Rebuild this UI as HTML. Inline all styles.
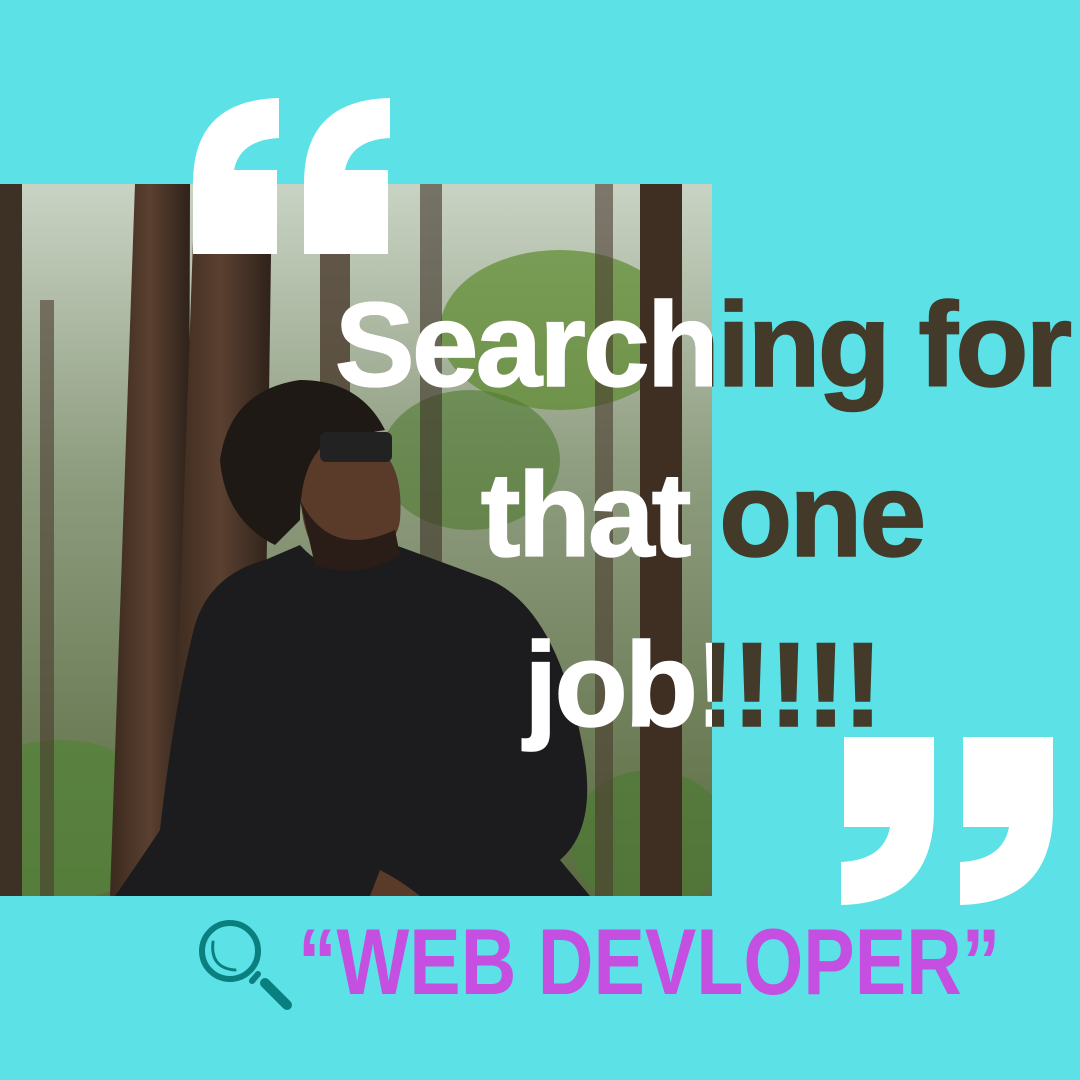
<!DOCTYPE html>
<html><head><meta charset="utf-8"><style>
html,body{margin:0;padding:0}
body{width:1080px;height:1080px;background:#5ce1e6;position:relative;overflow:hidden;font-family:"Liberation Sans",sans-serif}
.ph{position:absolute;left:0;top:184px;width:712px;height:712px}
.txt{position:absolute;left:0;top:0;width:1080px;height:1080px;pointer-events:none}
.txt div{position:absolute;left:0;width:1404px;text-align:center;font-weight:bold;font-size:120px;letter-spacing:-3px;white-space:nowrap;line-height:1;-webkit-text-stroke:1.5px currentColor}
.dark div{color:#433a2a}
.white{clip-path:inset(184px 368px 184px 0)}
.white div{color:#fff}
.wd{position:absolute;left:298px;top:915px;font-weight:bold;font-size:94px;color:#c44fe0;transform:scaleX(0.82);transform-origin:left top;white-space:nowrap;letter-spacing:0px;line-height:1}
</style></head><body>
<svg class="ph" viewBox="0 184 712 712" xmlns="http://www.w3.org/2000/svg">
<defs>
<linearGradient id="bg" x1="0" y1="0" x2="0" y2="1"><stop offset="0" stop-color="#c9d3c4"/><stop offset=".4" stop-color="#8f9d80"/><stop offset="1" stop-color="#5a6b40"/></linearGradient>
<linearGradient id="tr" x1="0" y1="0" x2="1" y2="0"><stop offset="0" stop-color="#3b2a1e"/><stop offset=".5" stop-color="#5a4030"/><stop offset="1" stop-color="#2e221a"/></linearGradient>
</defs>
<rect x="0" y="184" width="712" height="712" fill="url(#bg)"/>
<ellipse cx="560" cy="330" rx="120" ry="80" fill="#5d8a2e" opacity=".7"/>
<ellipse cx="470" cy="460" rx="90" ry="70" fill="#4f7a30" opacity=".6"/>
<ellipse cx="60" cy="820" rx="110" ry="80" fill="#55823a" opacity=".8"/>
<ellipse cx="650" cy="840" rx="80" ry="70" fill="#4e7a36" opacity=".7"/>
<rect x="0" y="184" width="22" height="712" fill="#3d3024"/>
<path d="M135 184 L190 184 L188 896 L110 896 Z" fill="url(#tr)"/>
<path d="M195 184 L272 184 L262 896 L170 896 Z" fill="url(#tr)"/>
<rect x="320" y="250" width="30" height="646" fill="#4a3a2c" opacity=".8"/>
<rect x="420" y="184" width="22" height="712" fill="#3e3228" opacity=".6"/>
<rect x="640" y="184" width="42" height="712" fill="#3f2f23"/>
<rect x="595" y="184" width="18" height="712" fill="#4a3b2e" opacity=".6"/>
<rect x="40" y="300" width="14" height="596" fill="#4a3b2e" opacity=".6"/>
<path d="M195 625 Q210 575 265 560 L300 545 Q340 590 395 545 Q450 565 490 580 Q560 610 585 760 Q595 830 560 860 L590 896 L115 896 Q140 860 160 830 Q175 700 195 625 Z" fill="#1c1c1e"/>
<path d="M300 480 Q310 420 360 440 Q405 450 400 520 Q395 560 330 560 Q300 550 300 480 Z" fill="#5a3a28"/>
<path d="M300 500 Q330 560 395 530 L400 555 Q360 580 315 565 Z" fill="#2a1c16"/>
<path d="M220 460 Q230 390 300 380 Q360 380 385 430 L330 440 Q300 460 300 520 L275 545 Q225 520 220 460 Z" fill="#1f1915"/>
<rect x="320" y="432" width="72" height="30" rx="6" fill="#222"/>
<path d="M380 870 Q400 880 420 896 L370 896 Z" fill="#5a3a28"/>
</svg>
<div class="txt dark">
<div style="top:285px">Searching for</div>
<div style="top:455px">that one</div>
<div style="top:625px">job!!!!!</div>
</div>
<div class="txt white">
<div style="top:285px">Searching for</div>
<div style="top:455px">that one</div>
<div style="top:625px">job!!!!!</div>
</div>
<svg style="position:absolute;left:0;top:0" width="1080" height="1080" xmlns="http://www.w3.org/2000/svg">
<g fill="#fff">
<path d="M193 254 L193 183 Q193 100 279 98 L279 138 Q240 140 234 170 L277 170 L277 254 Z"/>
<path d="M304 254 L304 183 Q304 100 390 98 L390 138 Q351 140 345 170 L388 170 L388 254 Z"/>
<path d="M844 737 L934 737 L934 810 Q934 903 841 905 L841 862 Q884 860 890 827 L844 827 Z"/>
<path d="M963 737 L1053 737 L1053 810 Q1053 903 960 905 L960 862 Q1003 860 1009 827 L963 827 Z"/>
</g>
<g stroke="#0a7f80" fill="none" stroke-linecap="round">
<circle cx="230" cy="951" r="28" stroke-width="6"/>
<path d="M213 942 Q210 968 235 970" stroke-width="3"/>
<line x1="252" y1="981" x2="258" y2="974" stroke-width="6"/>
<line x1="265" y1="983" x2="287" y2="1005" stroke-width="10"/>
</g>
</svg>
<div class="wd">“WEB DEVLOPER”</div>
</body></html>
